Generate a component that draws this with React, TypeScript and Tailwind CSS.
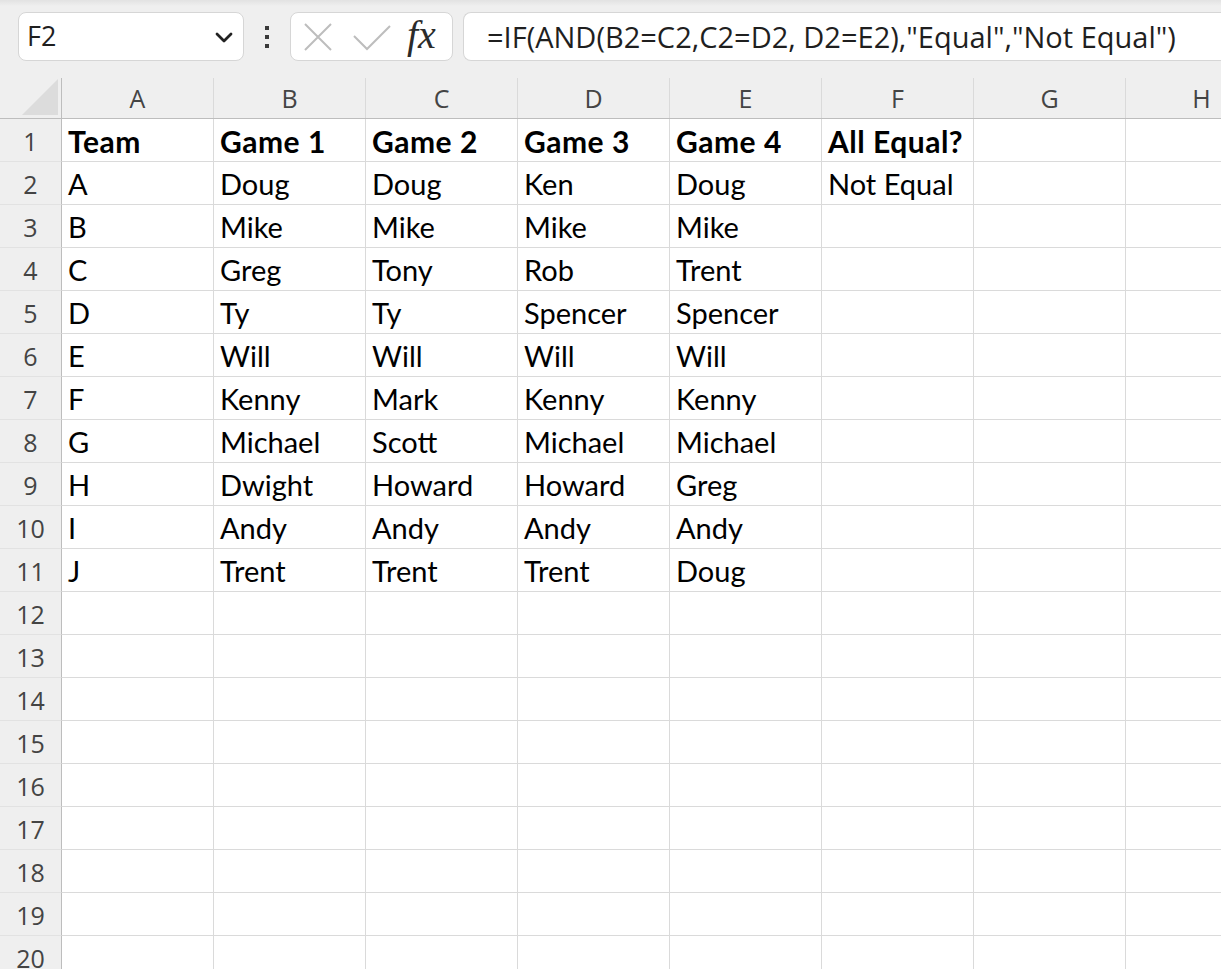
import React from "react";

const COLS = ["A", "B", "C", "D", "E", "F", "G", "H"];
const DATA: string[][] = [
  ["Team", "Game 1", "Game 2", "Game 3", "Game 4", "All Equal?"],
  ["A", "Doug", "Doug", "Ken", "Doug", "Not Equal"],
  ["B", "Mike", "Mike", "Mike", "Mike"],
  ["C", "Greg", "Tony", "Rob", "Trent"],
  ["D", "Ty", "Ty", "Spencer", "Spencer"],
  ["E", "Will", "Will", "Will", "Will"],
  ["F", "Kenny", "Mark", "Kenny", "Kenny"],
  ["G", "Michael", "Scott", "Michael", "Michael"],
  ["H", "Dwight", "Howard", "Howard", "Greg"],
  ["I", "Andy", "Andy", "Andy", "Andy"],
  ["J", "Trent", "Trent", "Trent", "Doug"],
];

const cellFont = { fontFamily: "Lato, 'Open Sans', sans-serif" };
const uiFont = { fontFamily: "'Open Sans', 'Noto Sans', sans-serif" };

function Toolbar() {
  return (
    <div className="relative h-[78px] shrink-0 bg-[#efefef]">
      <div className="absolute inset-x-0 top-0 h-[6px] bg-gradient-to-b from-[#e2e2e2] to-[#efefef]" />
      <div className="relative flex items-start pt-[12px] pl-[18px]">
        {/* name box */}
        <div className="flex h-[49px] w-[226px] items-center justify-between rounded-[8px] border border-[#d6d6d6] bg-white pl-[8px] pr-[10px]">
          <span className="text-[27px] text-[#1f1f1f]" style={uiFont}>
            F2
          </span>
          <svg width="18" height="11" viewBox="0 0 18 11" className="mt-[2px]">
            <path d="M2 2 L9 9 L16 2" fill="none" stroke="#222" strokeWidth="2.8" strokeLinecap="round" strokeLinejoin="round" />
          </svg>
        </div>
        {/* dots */}
        <div className="flex h-[49px] w-[46px] flex-col items-center justify-center gap-[5px]">
          <div className="h-[4px] w-[4px] bg-[#3a3a3a]" />
          <div className="h-[4px] w-[4px] bg-[#3a3a3a]" />
          <div className="h-[4px] w-[4px] bg-[#3a3a3a]" />
        </div>
        {/* fx box */}
        <div className="flex h-[49px] w-[163px] items-center rounded-[8px] border border-[#d6d6d6] bg-white pl-[12px]">
          <svg width="30" height="28" viewBox="0 0 30 28">
            <path d="M2 1 L28 27 M28 1 L2 27" fill="none" stroke="#bdbdbd" strokeWidth="2" />
          </svg>
          <svg width="38" height="26" viewBox="0 0 38 26" className="ml-[20px] mt-[2px]">
            <path d="M1 11 L14 24 L37 1" fill="none" stroke="#bdbdbd" strokeWidth="2" />
          </svg>
          <span
            className="ml-[16px] mt-[-4px] text-[40px] italic leading-none text-[#2b2b2b]"
            style={{ fontFamily: "'Liberation Serif', 'DejaVu Serif', serif" }}
          >
            fx
          </span>
        </div>
        {/* formula box */}
        <div className="ml-[10px] flex h-[49px] flex-1 items-center rounded-l-[8px] border border-r-0 border-[#d6d6d6] bg-white pl-[23px]">
          <span className="whitespace-nowrap text-[29px] text-[#1f1f1f]" style={uiFont}>
            =IF(AND(B2=C2,C2=D2, D2=E2),"Equal","Not Equal")
          </span>
        </div>
      </div>
    </div>
  );
}

function HeaderRow() {
  return (
    <div className="flex h-[41px] shrink-0 border-b border-[#bdbdbd] bg-[#efefef]">
      <div className="relative h-full w-[62px] shrink-0 border-r border-[#bdbdbd]">
        <svg className="absolute bottom-[3px] right-[3px]" width="36" height="36" viewBox="0 0 36 36">
          <polygon points="36,0 36,36 0,36" fill="#dcdcdc" />
        </svg>
      </div>
      {COLS.map((c) => (
        <div
          key={c}
          className="flex h-full w-[152px] shrink-0 items-center justify-center border-r border-[#dadada] pt-[1px] text-[25px] text-[#444]"
          style={uiFont}
        >
          {c}
        </div>
      ))}
    </div>
  );
}

function Row({ n, cells }: { n: number; cells: string[] }) {
  const bold = n === 1;
  return (
    <div className="flex h-[43px] shrink-0">
      <div
        className="flex h-full w-[62px] shrink-0 items-center justify-center border-b border-r border-b-[#e2e2e2] border-r-[#bdbdbd] bg-[#efefef] pt-[3px] text-[25px] text-[#444]"
        style={uiFont}
      >
        {n}
      </div>
      {COLS.map((c, i) => (
        <div
          key={c}
          className={`flex h-full w-[152px] shrink-0 items-end overflow-visible whitespace-nowrap border-b border-r border-[#dadada] bg-white pb-[2px] pl-[6px] leading-[36px] text-black ${bold ? "text-[30px] font-bold tracking-[0.5px]" : "text-[29px]"}`}
          style={cellFont}
        >
          {cells[i] ?? ""}
        </div>
      ))}
    </div>
  );
}

export default function App() {
  const rows = Array.from({ length: 20 }, (_, i) => DATA[i] ?? []);
  return (
    <div className="flex h-[969px] w-[1221px] flex-col overflow-hidden bg-[#efefef]">
      <Toolbar />
      <HeaderRow />
      {rows.map((r, i) => (
        <Row key={i} n={i + 1} cells={r} />
      ))}
    </div>
  );
}
